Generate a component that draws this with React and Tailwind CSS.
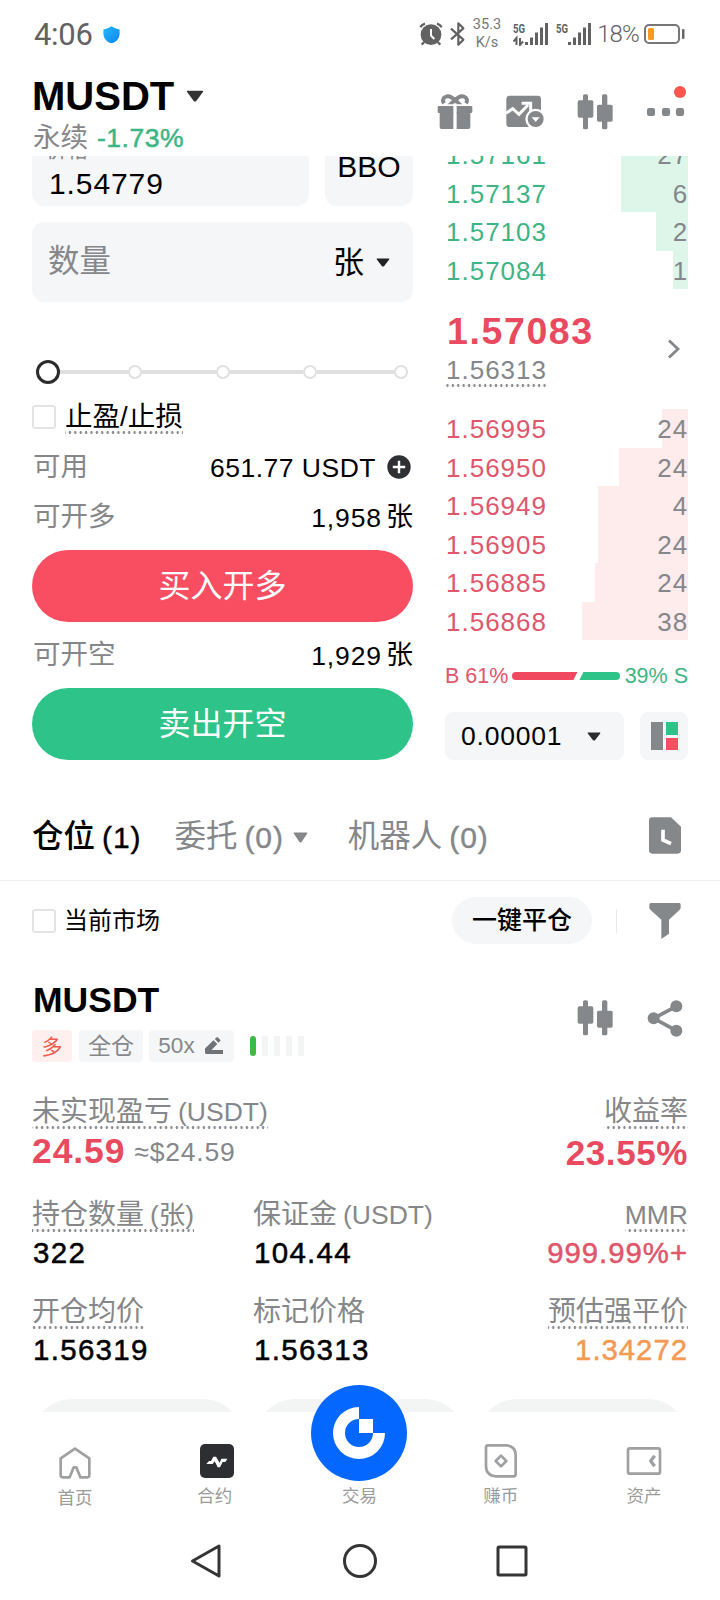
import clsx from 'clsx'

const ASKS = [
  { price: '1.57161', qty: 27, depth: 67 },
  { price: '1.57137', qty: 6, depth: 67 },
  { price: '1.57103', qty: 2, depth: 32 },
  { price: '1.57084', qty: 1, depth: 15 },
]

const BIDS = [
  { price: '1.56995', qty: 24, depth: 26 },
  { price: '1.56950', qty: 24, depth: 69 },
  { price: '1.56949', qty: 4, depth: 90 },
  { price: '1.56905', qty: 24, depth: 90 },
  { price: '1.56885', qty: 24, depth: 93 },
  { price: '1.56868', qty: 38, depth: 106 },
]

export default function App() {
  return (
    <div className="w-[720px] h-[1600px] overflow-hidden bg-white flex flex-col text-black leading-none whitespace-nowrap font-['Liberation_Sans','Noto_Sans_CJK_SC',sans-serif]">
      <StatusBar />
      <Header />
      <main className="h-[1256px] shrink-0 overflow-hidden">
        <div className="-mt-[30px] px-8 flex gap-8">
          <OrderForm />
          <OrderBook />
        </div>
        <Tabs />
        <MarketFilter />
        <Position />
        <div className="px-8 mt-7 grid grid-cols-3 gap-3">
          <div className="h-20 rounded-full bg-[#f3f5f5]" />
          <div className="h-20 rounded-full bg-[#f3f5f5]" />
          <div className="h-20 rounded-full bg-[#f3f5f5]" />
        </div>
      </main>
      <BottomNav />
      <SystemNav />
    </div>
  )
}

function StatusBar() {
  return (
    <div className="h-[68px] shrink-0 pl-[34px] pr-[35px] flex items-center justify-between text-[#626262] font-['Roboto',sans-serif]">
      <div className="flex items-center gap-[10px]">
        <span className="text-[31px] tracking-[-0.3px]">4:06</span>
        <svg width="17" height="17" viewBox="0 0 17 17">
          <defs>
            <linearGradient id="shield" x1="0" y1="0" x2="1" y2="1">
              <stop offset="0" stopColor="#28b8ff" />
              <stop offset="1" stopColor="#0a86f0" />
            </linearGradient>
          </defs>
          <path d="M8.500 0.300Q12 2.500 16.600 3.400V8Q16 14 11 16.500Q8.500 17.500 6 16.500Q1 14 0.400 8V3.400Q5 2.500 8.500 0.300Z" fill="url(#shield)" />
        </svg>
      </div>
      <div className="flex items-center">
        <AlarmIcon />
        <BluetoothIcon />
        <div className="w-[30px] mx-[9px] -translate-x-[2px] text-center text-[14.5px] leading-[18px] text-[#777]">
          <div>35.3</div>
          <div>K/s</div>
        </div>
        <SignalIcon arrows />
        <SignalIcon className="ml-[7px]" />
        <span className="ml-[5px] w-[42px] text-center text-[24px] font-light tracking-[-0.9px]">18%</span>
        <svg className="ml-[5px]" width="41" height="20" viewBox="0 0 41 20">
          <rect x="1" y="1" width="34" height="18" rx="4" fill="none" stroke="#777" strokeWidth="2" />
          <rect x="4" y="4" width="6" height="12" rx="1.500" fill="#f79a1e" />
          <rect x="38" y="5" width="2.500" height="10" rx="1" fill="#666" />
        </svg>
      </div>
    </div>
  )
}

function AlarmIcon() {
  return (
    <svg width="24" height="24" viewBox="0 0 72 72">
      <circle cx="36" cy="38" r="31" fill="#626262" />
      <path d="M4 16Q8 8 18 5M68 16Q64 8 54 5M16 60 8 68M56 60 64 68" stroke="#626262" strokeWidth="7" fill="none" />
      <path d="M36 21V41L46 51" stroke="#fff" strokeWidth="6" fill="none" />
    </svg>
  )
}

function BluetoothIcon() {
  return (
    <svg className="ml-[7px]" width="15" height="24" viewBox="0 0 45 72">
      <path d="M3 20 40 53 25 68V4L40 19 3 52" stroke="#626262" strokeWidth="6.500" fill="none" strokeLinejoin="round" />
    </svg>
  )
}

function SignalIcon({ className, arrows = false }) {
  return (
    <svg className={className} width="36" height="24" viewBox="0 0 36 24">
      <text x="0" y="11" fontSize="12.500" fontWeight="700" fontFamily="Roboto" textLength="12" lengthAdjust="spacingAndGlyphs" fill="#626262">5G</text>
      {arrows && <path d="M3.500 23V16L0.500 19.500M7 16V23L10 19.500" stroke="#626262" strokeWidth="2" fill="none" />}
      <g fill="#626262">
        <rect x="12" y="20" width="3" height="3" />
        <rect x="17" y="15.500" width="3" height="7.500" />
        <rect x="22" y="10.500" width="3" height="12.500" />
        <rect x="27" y="5.500" width="3" height="17.500" />
        <rect x="32" y="1" width="3" height="22" />
      </g>
    </svg>
  )
}

function Header() {
  return (
    <header className="h-[88px] shrink-0 pl-8 pr-[36px] flex justify-between">
      <div>
        <div className="flex items-center mt-[8px] h-[40px]">
          <h1 className="text-[40px] font-bold">MUSDT</h1>
          <Caret className="ml-[12px] text-[#333]" width={18} height={12} />
        </div>
        <div className="flex items-center h-[30px] mt-[6px] text-[27.5px]">
          <span className="ml-px mt-px text-[#85878a]">永续</span>
          <span className="ml-[9px] mt-[3px] text-[26.5px] tracking-[0.5px] text-[#3db584] [-webkit-text-stroke:0.5px]">-1.73%</span>
        </div>
      </div>
      <div className="flex items-start mt-[26px] gap-[33px]">
        <svg className="-translate-x-px" width="36" height="36" viewBox="0 0 108 108" fill="#85888b">
          <path d="M21 28C10 10 34-4 54 20 74-4 98 10 87 28" fill="none" stroke="#85888b" strokeWidth="12" />
          <path d="M54 10 32 31H48L54 25 60 31H76Z" />
          <path d="M6 36H49V57H6Q2 57 2 53V40Q2 36 6 36ZM59 36H102Q106 36 106 40V53Q106 57 102 57H59Z" />
          <path d="M8 55H49V105H14Q8 105 8 99ZM59 55H100V99Q100 105 94 105H59Z" />
        </svg>
        <svg className="-translate-x-px" width="38" height="34" viewBox="0 0 114 102">
          <rect x="1" y="5" width="104" height="94" rx="10" fill="#85888b" />
          <path d="M0 58 20 44 39 61 66 33" fill="none" stroke="#fff" strokeWidth="9" />
          <path d="M47 28H74V52" fill="none" stroke="#fff" strokeWidth="9" />
          <circle cx="89" cy="75" r="31" fill="#fff" />
          <circle cx="89" cy="75" r="24" fill="#85888b" />
          <path d="M77 70H101L89 84Z" fill="#fff" />
        </svg>
        <CandlesIcon className="-translate-x-px" />
        <div className="relative w-[37px] h-[36px] flex items-center justify-between">
          <i className="size-2 rounded-[2px] bg-[#85888b]" />
          <i className="size-2 rounded-[2px] bg-[#85888b]" />
          <i className="size-2 rounded-[2px] bg-[#85888b]" />
          <i className="absolute -top-2 -right-[2px] size-3 rounded-full bg-[#fb554f]" />
        </div>
      </div>
    </header>
  )
}

function CandlesIcon({ className }) {
  return (
    <svg className={className} width="36" height="36" viewBox="0 0 108 108" fill="#85888b">
      <rect x="18" y="1" width="15" height="105" rx="5" />
      <rect x="2" y="19" width="47" height="52" rx="5" />
      <rect x="75" y="1" width="16" height="105" rx="5" />
      <rect x="60" y="32" width="47" height="51" rx="5" />
    </svg>
  )
}

function Caret({ className, width = 14, height = 9 }) {
  return (
    <svg className={className} width={width} height={height} viewBox="0 0 14 9" preserveAspectRatio="none">
      <path d="M1.200 0.500H12.800Q14 0.600 13 1.700L8 8.200Q7 9 6 8.200L1 1.700Q0 0.600 1.200 0.500Z" fill="currentColor" />
    </svg>
  )
}

function Dotted({ children, className }) {
  return (
    <span className={clsx('inline-flex items-center bg-[radial-gradient(circle,#8b8d90_1.1px,transparent_1.5px)] bg-[length:5.4px_3px] bg-repeat-x bg-bottom', className)}>
      {children}
    </span>
  )
}

function OrderForm() {
  return (
    <section className="w-[381px] shrink-0 flex flex-col">
      <div className="flex gap-4 h-20">
        <div className="w-[277px] rounded-xl bg-[#f4f6f8] px-4">
          <div className="mt-[13px] -ml-[2px] text-[21px] text-[#85878a]">价格</div>
          <div className="mt-[9px] ml-px text-[30px] tracking-[0.9px]">1.54779</div>
        </div>
        <div className="flex-1 rounded-xl bg-[#f4f6f8] pt-px flex items-center justify-center text-[30px]">BBO</div>
      </div>
      <div className="mt-4 h-20 rounded-xl bg-[#f4f6f8] pl-4 pr-[23px] flex items-center">
        <span className="text-[31.5px] text-[#85878a]">数量</span>
        <span className="ml-auto text-[31px]">张</span>
        <Caret className="ml-3 text-[#222]" />
      </div>
      <Slider />
      <div className="mt-4 h-[34px] flex items-center">
        <Checkbox />
        <Dotted className="ml-[9px] h-[33px] text-[27.5px]">止盈/止损</Dotted>
      </div>
      <FormRow className="mt-2 h-[50px]" label="可用">
        <span className="mt-[2px] text-[26.5px] tracking-[0.5px]">651.77 USDT</span>
        <svg className="ml-[11px] mr-[2px]" width="24" height="24" viewBox="0 0 24 24">
          <circle cx="12" cy="12" r="11.700" fill="#2e3033" />
          <path d="M12 5.800V18.200M5.800 12H18.200" stroke="#fff" strokeWidth="2.400" />
        </svg>
      </FormRow>
      <FormRow className="h-[50px]" label="可开多">
        <span className="mt-[3px] text-[26.5px] tracking-[0.9px]">1,958</span>
        <span className="ml-[4px] text-[27px]">张</span>
      </FormRow>
      <button className="mt-2 h-[72px] rounded-full bg-[#f94e62] text-white text-[32px]">买入开多</button>
      <FormRow className="h-[66px]" label="可开空">
        <span className="mt-[3px] text-[26.5px] tracking-[0.9px]">1,929</span>
        <span className="ml-[4px] text-[27px]">张</span>
      </FormRow>
      <button className="h-[72px] rounded-full bg-[#2ec388] text-white text-[32px]">卖出开空</button>
    </section>
  )
}

function FormRow({ className, label, children }) {
  return (
    <div className={clsx('flex items-center', className)}>
      <span className="ml-px mr-auto text-[27.5px] text-[#85878a]">{label}</span>
      {children}
    </div>
  )
}

function Checkbox() {
  return <span className="size-6 shrink-0 rounded-[3px] border-2 border-[#e2e3e4]" />
}

function Slider() {
  return (
    <div className="mt-[58px] h-6 pl-1 pr-[5px] flex items-center">
      <i className="size-6 rounded-full border-[3px] border-[#2c2c2e]" />
      <i className="w-[68px] h-1 bg-[#dfdfdf]" />
      <i className="size-[14px] rounded-full border-2 border-[#e0e0e0]" />
      <i className="flex-1 h-1 bg-[#dfdfdf]" />
      <i className="size-[14px] rounded-full border-2 border-[#e0e0e0]" />
      <i className="flex-1 h-1 bg-[#dfdfdf]" />
      <i className="size-[14px] rounded-full border-2 border-[#e0e0e0]" />
      <i className="w-[77px] h-1 bg-[#dfdfdf]" />
      <i className="size-[14px] rounded-full border-2 border-[#e0e0e0]" />
    </div>
  )
}

function BookRow({ row, side }) {
  return (
    <div className="h-[38.5px] flex justify-between text-[26px]">
      <span className={clsx('pt-[2px] pl-px tracking-[1px] flex items-center', side === 'ask' ? 'text-[#3db584]' : 'text-[#e0566b]')}>{row.price}</span>
      <span
        className={clsx('pt-[2px] tracking-[0.9px] flex items-center justify-end text-[#85878a]', side === 'ask' ? 'bg-[#def5e9]' : 'bg-[#feebec]')}
        style={{ width: row.depth }}
      >
        {row.qty}
      </span>
    </div>
  )
}

function OrderBook() {
  return (
    <section className="w-[243px] shrink-0 pt-[9px]">
      {ASKS.map((r) => (
        <BookRow key={r.price} row={r} side="ask" />
      ))}
      <div className="h-[120px] flex items-center justify-between">
        <div className="pt-[2px]">
          <div className="h-[36px] pl-[2px] flex items-center text-[37.5px] tracking-[1.6px] font-bold text-[#e94a60]">1.57083</div>
          <Dotted className="mt-[3px] h-[34px] pt-px pl-px text-[26px] tracking-[1px] text-[#85878a]">1.56313</Dotted>
        </div>
        <svg className="mr-[7px]" width="14" height="20" viewBox="0 0 14 20">
          <path d="M2 1.500 11 10 2 18.500" fill="none" stroke="#85878a" strokeWidth="2.800" />
        </svg>
      </div>
      {BIDS.map((r) => (
        <BookRow key={r.price} row={r} side="bid" />
      ))}
      <div className="h-[72px] flex items-center text-[21.5px]">
        <span className="mt-[2px] text-[#e0566b]">B 61%</span>
        <svg className="mx-auto" width="109" height="8" viewBox="0 0 110 8">
          <path d="M4 0H66L62 8H4A4 4 0 0 1 4 0Z" fill="#f0485e" />
          <path d="M72 0H105A4 4 0 0 1 105 8H68Z" fill="#2ec388" />
        </svg>
        <span className="mt-[2px] text-[#3db584]">39% S</span>
      </div>
      <div className="flex gap-4">
        <div className="w-[179px] h-12 rounded-lg bg-[#f4f6f8] pl-[16px] pr-[23px] flex items-center justify-between text-[26.5px]">
          <span className="mt-px tracking-[0.8px]">0.00001</span>
          <Caret className="text-[#2c2c2e]" />
        </div>
        <div className="size-12 rounded-lg bg-[#f4f6f8] flex items-center justify-center gap-[3px]">
          <i className="w-3 h-7 bg-[#85888b]" />
          <div className="flex flex-col gap-[3px]">
            <i className="w-3 h-[12.5px] bg-[#2ec388]" />
            <i className="w-3 h-[12.5px] bg-[#f94e62]" />
          </div>
        </div>
      </div>
    </section>
  )
}

function Tabs() {
  return (
    <nav className="mt-[34px] h-[87px] px-8 flex items-center border-b border-[#efefef] text-[31.5px] text-[#85878a]">
      <TabLabel className="text-black font-medium" text="仓位" count={1} />
      <TabLabel className="ml-[33px]" text="委托" count={0} />
      <Caret className="ml-[9px]" width={15} height={11} />
      <TabLabel className="ml-10" text="机器人" count={0} />
      <svg className="ml-auto mr-[7px] -mt-[3px]" width="32" height="37" viewBox="0 0 96 111">
        <path d="M10 1H66L96 29V100Q96 110 86 110H10Q0 110 0 100V11Q0 1 10 1Z" fill="#85888b" />
        <path d="M42 38V69L66 80" fill="none" stroke="#fff" strokeWidth="11" />
      </svg>
    </nav>
  )
}

function TabLabel({ className, text, count }) {
  return (
    <span className={clsx('flex items-center', className)}>
      {text}
      <span className="ml-[7px] mt-[2px] text-[30px] tracking-[0.9px] [-webkit-text-stroke:0.4px]">({count})</span>
    </span>
  )
}

function MarketFilter() {
  return (
    <div className="h-[79px] px-8 flex items-center">
      <Checkbox />
      <span className="ml-2 text-[24px]">当前市场</span>
      <button className="ml-auto w-[140px] h-[47px] rounded-full bg-[#f4f6f8] text-[25px] font-medium">一键平仓</button>
      <i className="ml-6 w-px h-6 bg-[#e9e9e9]" />
      <svg className="ml-8 mr-[7px]" width="32" height="36" viewBox="0 0 96 108" fill="#85888b">
        <path d="M5 0H91Q95 0 95 5V14Q95 17 92 20L60 50V92L37 108V50L4 20Q1 17 1 14V5Q1 0 5 0Z" />
      </svg>
    </div>
  )
}

function Position() {
  return (
    <section className="px-8">
      <div className="mt-[20px] flex justify-between">
        <div>
          <h2 className="h-[42px] mb-[8px] pl-px flex items-center text-[35.5px] font-bold">MUSDT</h2>
          <div className="flex items-center h-8 text-[23px] text-[#85878a]">
            <span className="w-10 h-full rounded bg-[#fff0ef] text-[#ed5c4e] flex items-center justify-center text-[21px]">多</span>
            <span className="ml-[7px] w-16 h-full rounded bg-[#f4f6f8] flex items-center justify-center">全仓</span>
            <span className="ml-[6px] w-[85px] h-full rounded bg-[#f4f6f8] pr-[2px] flex items-center justify-center gap-[10px] text-[22.5px]">
              50x
              <svg width="18" height="18" viewBox="0 0 18 18" fill="#717477">
                <path d="M0 15V11.500L8.500 3.200 12.300 7 6.500 13H18V17H1Q0 17 0 15ZM9.800 2 11.500 0.400Q12.200-0.200 12.900 0.400L15.200 2.700Q15.800 3.400 15.200 4.100L13.500 5.800Z" />
              </svg>
            </span>
            <div className="ml-4 flex gap-[6px]">
              <i className="w-[6px] h-5 rounded-[3px] bg-[#3dbb43]" />
              <i className="w-[6px] h-5 bg-[#f3f4f4]" />
              <i className="w-[6px] h-5 bg-[#f3f4f4]" />
              <i className="w-[6px] h-5 bg-[#f3f4f4]" />
              <i className="w-[6px] h-5 bg-[#f3f4f4]" />
            </div>
          </div>
        </div>
        <div className="mt-[20px] mr-[5px] flex items-start gap-[34px]">
          <CandlesIcon />
          <svg width="36" height="37" viewBox="0 0 108 111" fill="#85888b">
            <path d="M88 19 20 55 88 92" fill="none" stroke="#85888b" strokeWidth="11" />
            <circle cx="88" cy="19" r="18" />
            <circle cx="20" cy="55" r="18" />
            <circle cx="88" cy="92" r="18" />
          </svg>
        </div>
      </div>

      <div className="mt-[33px] flex justify-between">
        <div className="flex flex-col items-start">
          <Label dotted text="未实现盈亏" unit="(USDT)" />
          <div className="h-[46px] flex items-center">
            <span className="text-[35.5px] tracking-[0.9px] font-bold text-[#e94a60]">24.59</span>
            <span className="ml-[9px] text-[26.5px] tracking-[0.8px] text-[#85878a]">≈$24.59</span>
          </div>
        </div>
        <div className="flex flex-col items-end">
          <Label dotted text="收益率" />
          <div className="h-[46px] flex items-center text-[35px] tracking-[0.6px] font-bold text-[#e94a60]">23.55%</div>
        </div>
      </div>

      <div className="mt-[23px] grid grid-cols-[221px_221px_1fr]">
        <Stat dotted label="持仓数量" unit="(张)" value="322" />
        <Stat label="保证金" unit="(USDT)" value="104.44" />
        <Stat dotted right unit="MMR" value="999.99%+" color="text-[#e0566b]" />
      </div>
      <div className="mt-[21px] grid grid-cols-[221px_221px_1fr]">
        <Stat dotted label="开仓均价" value="1.56319" />
        <Stat label="标记价格" value="1.56313" />
        <Stat dotted right label="预估强平价" value="1.34272" color="text-[#f39a55]" />
      </div>
    </section>
  )
}

function Label({ text, unit, dotted = false }) {
  const inner = (
    <>
      {text}
      {unit && <span className={clsx('text-[26.5px]', text && 'ml-[6px]')}>{unit}</span>}
    </>
  )
  const cls = 'h-[34px] text-[28px] text-[#85878a]'
  return dotted ? <Dotted className={cls}>{inner}</Dotted> : <span className={clsx('flex items-center', cls)}>{inner}</span>
}

function Stat({ label, unit, value, color = 'text-black', dotted = false, right = false }) {
  return (
    <div className={clsx('flex flex-col', right ? 'items-end' : 'items-start')}>
      <Label dotted={dotted} text={label} unit={unit} />
      <div className={clsx('h-[42px] pb-px flex items-center [-webkit-text-stroke:0.5px]', right ? 'text-[29.3px] tracking-[1px]' : 'pl-px text-[29.5px] tracking-[1.3px]', color)}>{value}</div>
    </div>
  )
}

function BottomNav() {
  return (
    <nav className="h-[108px] shrink-0 pl-1 pr-[5px] grid grid-cols-5 bg-white text-[17.5px] text-[#9a9b9d]">
      <NavItem label="首页" className="pt-[34px]">
        <svg width="34" height="34" viewBox="0 0 102 102" fill="none" stroke="#9fa0a2" strokeWidth="8" strokeLinejoin="round">
          <path d="M51 8 94 37V88Q94 94 88 94H67L55 64H47L35 94H14Q8 94 8 88V37Z" />
        </svg>
      </NavItem>
      <NavItem label="合约" className="pt-8 pr-[5px]">
        <svg className="translate-x-[2px]" width="34" height="34" viewBox="0 0 102 102">
          <rect width="102" height="102" rx="15" fill="#2c2e31" />
          <path d="M19 60 27 51H33L40 38H48L59 56 64 44H82L76 54H68L60 70H53L44 52 38 60Z" fill="#fff" />
        </svg>
      </NavItem>
      <div className="relative flex flex-col items-center">
        <div className="absolute -top-[27px] size-24 rounded-full bg-[#0467ff] flex items-center justify-center">
          <svg width="52" height="52" viewBox="0 0 156 156" fill="#fff">
            <path d="M78 0A78 78 0 1 0 156 78H120A42 42 0 1 1 78 36Z" />
            <rect x="78" y="36" width="42" height="42" />
          </svg>
        </div>
        <span className="mt-[76px]">交易</span>
      </div>
      <NavItem label="赚币" className="pt-8 pr-[2px]">
        <svg width="34" height="34" viewBox="0 0 102 102" fill="none" stroke="#9fa0a2" strokeWidth="8" strokeLinejoin="round">
          <path d="M12 4H66Q95 6 95 34V90Q95 97 88 97H36Q6 95 6 66V11Q6 4 12 4Z" />
          <path d="M51 35 67 51 51 67 35 51Z" />
        </svg>
      </NavItem>
      <NavItem label="资产">
        <svg width="36" height="34" viewBox="0 0 108 102" fill="none" stroke="#9fa0a2" strokeWidth="8" strokeLinejoin="round">
          <rect x="6" y="13" width="96" height="76" rx="6" />
          <path d="M86 35 74 51 86 67" strokeWidth="10" />
        </svg>
      </NavItem>
    </nav>
  )
}

function NavItem({ label, className = 'pt-8', children }) {
  return (
    <div className={clsx('flex flex-col items-center', className)}>
      {children}
      <span className="mt-[10px]">{label}</span>
    </div>
  )
}

function SystemNav() {
  return (
    <div className="flex-1 pt-[2px] flex items-center justify-center">
      <svg width="340" height="40" viewBox="0 0 340 40" fill="none" stroke="#353535" strokeWidth="3" strokeLinejoin="round">
        <path d="M2.500 20 29 5V35Z" />
        <circle cx="170" cy="20" r="15.500" />
        <rect x="308" y="6" width="28" height="28" rx="1" />
      </svg>
    </div>
  )
}
